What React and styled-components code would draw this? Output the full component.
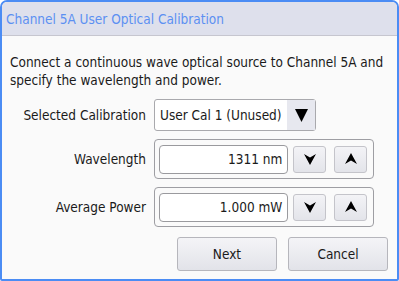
import React from 'react'
import styled, { createGlobalStyle } from 'styled-components';

const GlobalStyle = createGlobalStyle`
  html, body {
    margin: 0;
    padding: 0;
    background: #ffffff;
  }
  body {
    font-family: "DejaVu Sans Condensed", "DejaVu Sans", sans-serif;
  }
`

const Dialog = styled.div`
  width: 399px;
  height: 281px;
  box-sizing: border-box;
  border: 2px solid #4b8cf4;
  border-radius: 7px 7px 2px 2px;
  background: #fafafa;
  overflow: hidden;
  display: flex;
  flex-direction: column;
`

const TitleBar = styled.div`
  height: 33px;
  flex: none;
  display: flex;
  align-items: center;
  padding-left: 4px;
  background: #dee0ec;
  border-bottom: 1px solid #c6c6cf;
  color: #5c90f2;
  font-size: 13.5px;
`

const Body = styled.div`
  flex: 1;
  display: flex;
  flex-direction: column;
  padding: 17px 9px 0 8px;
`

const Message = styled.p`
  margin: 0 0 10px 0;
  font-size: 13.5px;
  line-height: 18px;
  color: #1a1a1a;
`

const Form = styled.div`
  display: grid;
  grid-template-columns: 136px auto;
  column-gap: 8px;
  row-gap: 8px;
  align-items: center;
  justify-items: start;
`

const Label = styled.div`
  justify-self: end;
  font-size: 13.5px;
  color: #1a1a1a;
`

const Select = styled.div`
  width: 162px;
  height: 32px;
  box-sizing: border-box;
  display: flex;
  align-items: stretch;
  border: 1px solid #a9a9ad;
  border-radius: 3px;
  background: #ffffff;
  font-size: 13.5px;
  color: #1a1a1a;
`

const SelectText = styled.div`
  flex: 1;
  display: flex;
  align-items: center;
  padding-left: 5px;
`

const SelectArrow = styled.div`
  width: 28px;
  display: flex;
  align-items: center;
  justify-content: center;
  background: #e7e8ef;
`

const SpinGroup = styled.div`
  width: 220px;
  height: 40px;
  box-sizing: border-box;
  display: flex;
  align-items: center;
  gap: 5px;
  padding: 0 6px 0 4px;
  border: 1px solid #9e9ea3;
  border-radius: 4px;
  background: #fafafa;
`

const ValueBox = styled.div`
  width: 130px;
  height: 29px;
  box-sizing: border-box;
  display: flex;
  align-items: center;
  justify-content: flex-end;
  padding-right: 5px;
  border: 1px solid #9a9a9e;
  border-radius: 4px;
  background: #ffffff;
  font-size: 13.5px;
  color: #1a1a1a;
`

const StepButton = styled.div`
  width: 33px;
  height: 27px;
  box-sizing: border-box;
  display: flex;
  align-items: center;
  justify-content: center;
  margin-left: ${props => props.spaced ? "3px" : "0"};
  border: 1px solid #c4c4ca;
  border-radius: 3px;
  background: linear-gradient(#f3f3f6, #e3e4ea);
`

const Footer = styled.div`
  display: flex;
  justify-content: flex-end;
  gap: 11px;
  margin-top: 10px;
`

const Button = styled.div`
  width: 100px;
  height: 34px;
  box-sizing: border-box;
  display: flex;
  align-items: center;
  justify-content: center;
  border: 1px solid #b6b6bc;
  border-radius: 3px;
  background: linear-gradient(#f4f4f7, #e2e3e9);
  font-size: 13.5px;
  color: #1a1a1a;
`

const Triangle = () => (
  <svg width="13" height="13" viewBox="0 0 13 13">
    <polygon points="0,0 13,0 6.5,13" fill="#000" />
  </svg>
)

// filled dart-shaped arrowhead, as on the step buttons
const Chevron = ({ up }) => (
  <svg width="12" height="12" viewBox="0 0 12 12">
    <polygon
      points={up ? "0,11 6,7.5 12,11 6,0" : "0,1 6,4.5 12,1 6,12"}
      fill="#000"
    />
  </svg>
)

const Spinner = ({ value }) => (
  <SpinGroup>
    <ValueBox>{value}</ValueBox>
    <StepButton><Chevron /></StepButton>
    <StepButton spaced><Chevron up /></StepButton>
  </SpinGroup>
)

export default function App() {
  return (
    <>
      <GlobalStyle />
      <Dialog>
        <TitleBar>Channel 5A User Optical Calibration</TitleBar>
        <Body>
          <Message>
            Connect a continuous wave optical source to Channel 5A and specify the wavelength and power.
          </Message>
          <Form>
            <Label>Selected Calibration</Label>
            <Select>
              <SelectText>User Cal 1 (Unused)</SelectText>
              <SelectArrow><Triangle /></SelectArrow>
            </Select>
            <Label>Wavelength</Label>
            <Spinner value="1311 nm" />
            <Label>Average Power</Label>
            <Spinner value="1.000 mW" />
          </Form>
          <Footer>
            <Button>Next</Button>
            <Button>Cancel</Button>
          </Footer>
        </Body>
      </Dialog>
    </>
  )
}
